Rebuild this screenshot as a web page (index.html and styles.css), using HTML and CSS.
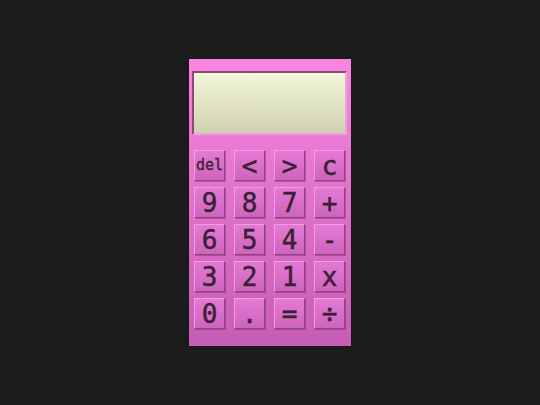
FILE: index.html
```html
<!DOCTYPE html>
<html>
<head>
<meta charset="utf-8">
<link rel="stylesheet" href="styles.css">
</head>
<body>
<div class="calc">
  <div class="display"></div>
  <div class="keys">
    <button class="key small">del</button>
    <button class="key">&lt;</button>
    <button class="key">&gt;</button>
    <button class="key">c</button>
    <button class="key">9</button>
    <button class="key">8</button>
    <button class="key">7</button>
    <button class="key">+</button>
    <button class="key">6</button>
    <button class="key">5</button>
    <button class="key">4</button>
    <button class="key">-</button>
    <button class="key">3</button>
    <button class="key">2</button>
    <button class="key">1</button>
    <button class="key">x</button>
    <button class="key">0</button>
    <button class="key">.</button>
    <button class="key">=</button>
    <button class="key">÷</button>
  </div>
</div>
</body>
</html>
```
FILE: styles.css
```css
html, body {
  margin: 0;
  padding: 0;
  background: #1c1c1c;
  width: 540px;
  height: 405px;
  overflow: hidden;
}
body {
  display: flex;
  justify-content: center;
  align-items: flex-start;
}
.calc {
  box-sizing: border-box;
  width: 162px;
  height: 287px;
  margin-top: 59px;
  padding-top: 12px;
  background: linear-gradient(#fa86e2, #c65db4);
  box-shadow: 0 0 2px rgba(0,0,0,0.4);
}
.display {
  box-sizing: border-box;
  height: 64px;
  margin: 0 4px 0 3px;
  border: 2px solid;
  border-color: #8a4a7c #e9a2dc #e9a2dc #8a4a7c;
  background: linear-gradient(#f3f8da, #d0d1b1);
}
.keys {
  display: grid;
  grid-template-columns: repeat(4, 31px);
  grid-auto-rows: 31px;
  column-gap: 9px;
  row-gap: 6px;
  margin: 15px 0 0 5px;
}
.key {
  box-sizing: border-box;
  width: 31px;
  height: 31px;
  padding: 0;
  margin: 0;
  border: 1px solid;
  border-color: #f49ae6 #8e4582 #8e4582 #f49ae6;
  background: linear-gradient(#e57ad5, #cd64bd);
  color: #3a2236;
  font-family: "DejaVu Sans Mono", monospace;
  font-size: 26px;
  font-weight: normal;
  -webkit-text-stroke: 0.5px #3a2236;
  line-height: 31px;
  text-align: center;
  box-shadow: 1px 1px 0 rgba(90,30,80,0.35);
}
.key.small {
  font-size: 15px;
  -webkit-text-stroke: 0.3px #3a2236;
  line-height: 29px;
}
```
